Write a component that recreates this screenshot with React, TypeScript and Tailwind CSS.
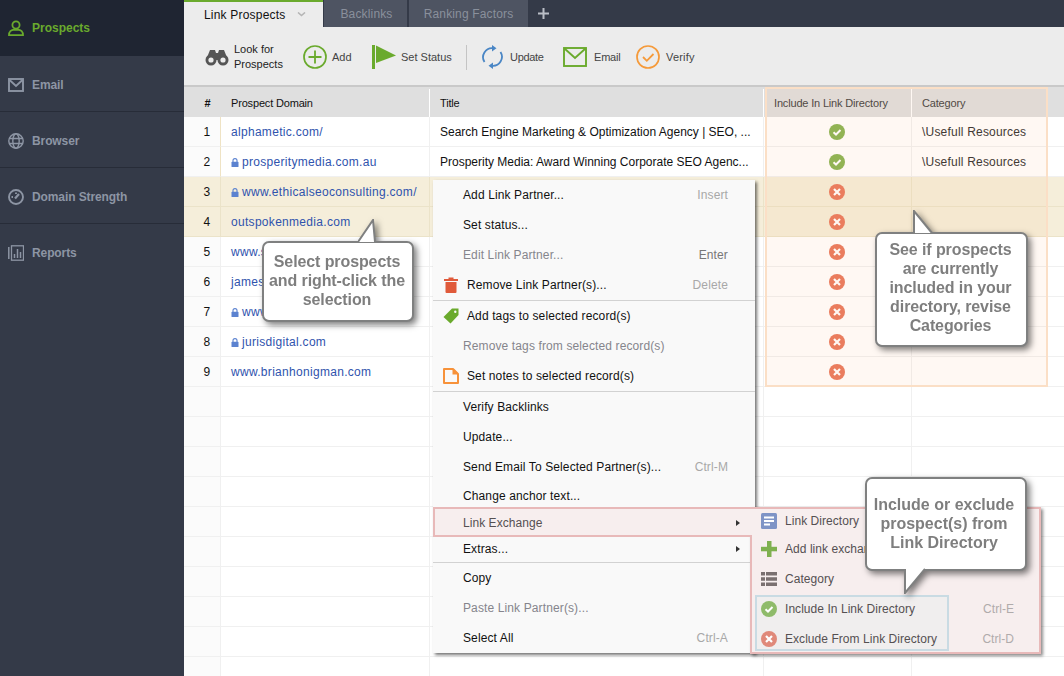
import React from "react";

const Person = () => (
  <svg width="16" height="16" viewBox="0 0 16 16" fill="none" stroke="#6aaa2d" strokeWidth="1.8"><circle cx="8" cy="5" r="3.6" /><path d="M1 15.2c0-3.6 2.6-5.2 4-5.4h6c1.6.2 4 1.8 4 5.4z" /></svg>
);
const Mail = () => (
  <svg width="16" height="14" viewBox="0 0 16 14" fill="none" stroke="#8d95a4" strokeWidth="1.9"><rect x="1" y="1" width="14" height="12" /><path d="M1 1.5 8 8l7-6.5" /></svg>
);
const Globe = () => (
  <svg width="16" height="16" viewBox="0 0 16 16" fill="none" stroke="#8d95a4" strokeWidth="1.4"><circle cx="8" cy="8" r="7.2" /><ellipse cx="8" cy="8" rx="3.2" ry="7.2" /><path d="M1 5.5h14M1 10.5h14" /></svg>
);
const Gauge = () => (
  <svg width="16" height="16" viewBox="0 0 16 16" fill="none" stroke="#8d95a4" strokeWidth="1.9"><circle cx="8" cy="8" r="7" /><path d="M7 9.5 11 5" strokeWidth="2.2" /><path d="M3.5 8h1.5M8 3.5V5" /></svg>
);
const ReportIcon = () => (
  <svg width="16" height="16" viewBox="0 0 16 16" fill="none" stroke="#8d95a4" strokeWidth="1.3"><rect x="3.5" y="0.8" width="12" height="14.4" /><path d="M0.8 2v12" strokeWidth="1.5" /><path d="M6.5 13V9M9.5 13V4M12.5 13V7" strokeWidth="1.5" /></svg>
);
const Binoculars = () => (
  <svg width="24" height="18" viewBox="0 0 24 18"><path d="M5 2h5l1 3h2l1-3h5l4 10H1z" fill="#555" /><circle cx="6" cy="12" r="5.5" fill="#555" /><circle cx="18" cy="12" r="5.5" fill="#555" /><circle cx="6" cy="12" r="2.6" fill="#ececec" /><circle cx="18" cy="12" r="2.6" fill="#ececec" /></svg>
);
const AddIcon = () => (
  <svg width="24" height="24" viewBox="0 0 24 24" fill="none" stroke="#6aaa2d"><circle cx="12" cy="12" r="11" strokeWidth="1.7" /><path d="M12 5.5v13M5.5 12h13" strokeWidth="1.8" /></svg>
);
const Flag = () => (
  <svg width="24" height="24" viewBox="0 0 24 24" fill="#6aaa2d"><rect x="0" y="0" width="3" height="24" /><path d="M4 0.5 24 10.5 4 18z" /></svg>
);
const UpdateIcon = () => (
  <svg width="21" height="24" viewBox="0 0 21 24" fill="none" stroke="#4a86c5" strokeWidth="1.8"><path d="M2.5 17A9 9 0 0 1 11 3.2" /><path d="M18.5 7A9 9 0 0 1 10 20.8" /><path d="M10 0v6.5l4.5-3.2z" fill="#4a86c5" stroke="none" /><path d="M11 24v-6.5l-4.5 3.2z" fill="#4a86c5" stroke="none" /></svg>
);
const MailGreen = () => (
  <svg width="24" height="20" viewBox="0 0 24 20" fill="none" stroke="#6aaa2d" strokeWidth="1.9"><rect x="1" y="1" width="22" height="18" /><path d="M1.5 1.5 12 11 22.5 1.5" /></svg>
);
const VerifyIcon = () => (
  <svg width="24" height="24" viewBox="0 0 24 24" fill="none" stroke="#f59a3a"><circle cx="12" cy="12" r="11" strokeWidth="1.7" /><path d="M7 12l3.8 3.8L17.5 9" strokeWidth="1.8" /></svg>
);
const Lock = () => (
  <svg width="8" height="9" viewBox="0 0 8 9" className="mr-[3px] shrink-0"><path d="M2 4V2.6a2 2 0 0 1 4 0V4" fill="none" stroke="#5b82d0" strokeWidth="1.1" /><rect x="0.5" y="3.8" width="7" height="5.2" rx="0.6" fill="#5b82d0" /></svg>
);
const Ok = ({ c = "#8ab554" }: { c?: string }) => (
  <svg width="16" height="16" viewBox="0 0 16 16"><circle cx="8" cy="8" r="8" fill={c} /><path d="M4.5 8.2 7 10.5l4.5-4.5" fill="none" stroke="#fff" strokeWidth="2" /></svg>
);
const No = ({ c = "#e97b5f" }: { c?: string }) => (
  <svg width="16" height="16" viewBox="0 0 16 16"><circle cx="8" cy="8" r="8" fill={c} /><path d="M5 5l6 6M11 5l-6 6" fill="none" stroke="#fff" strokeWidth="2.2" /></svg>
);
const Trash = () => (
  <svg width="14" height="16" viewBox="0 0 14 16" fill="#e05a3a"><rect x="0" y="2" width="14" height="2" /><rect x="4.5" y="0.5" width="5" height="2" /><path d="M1.5 5h11v10a1 1 0 0 1-1 1h-9a1 1 0 0 1-1-1z" /></svg>
);
const Tag = () => (
  <svg width="16" height="16" viewBox="0 0 16 16"><path d="M9 0.5h6.5V7l-8 8.5L0.5 9z" fill="#6aaa2d" /><circle cx="12.3" cy="3.7" r="1.2" fill="#f9f9f9" /></svg>
);
const Note = () => (
  <svg width="16" height="16" viewBox="0 0 16 16"><path d="M1 1h9l5 5v9H1z" fill="none" stroke="#f7923a" strokeWidth="2" strokeLinejoin="round" /><path d="M9.5 1h1.2L15 5.3v1.2H9.5z" fill="#f7923a" /></svg>
);
const ListBlue = () => (
  <svg width="16" height="16" viewBox="0 0 16 16"><rect width="16" height="16" rx="1.5" fill="#7f94c6" /><path d="M3 4.5h10M3 8h10M3 11.5h6" stroke="#fff" strokeWidth="1.9" /></svg>
);
const PlusGreen = () => (
  <svg width="16" height="16" viewBox="0 0 16 16" fill="#7fb04f"><rect x="6" y="0" width="4.5" height="16" /><rect x="0" y="5.8" width="16" height="4.5" /></svg>
);
const CatIcon = () => (
  <svg width="16" height="16" viewBox="0 0 16 16" fill="#7a7070"><path d="M0 1h4v3.5H0zM5 1h11v3.5H5zM0 6.2h4v3.5H0zM5 6.2h11v3.5H5zM0 11.5h4V15H0zM5 11.5h11V15H5z" /></svg>
);

const rows: { d: string; lock?: boolean; t?: string; ok?: boolean; cat?: string }[] = [
  { d: "alphametic.com/", t: "Search Engine Marketing & Optimization Agency | SEO, ...", ok: true, cat: "\\Usefull Resources" },
  { d: "prosperitymedia.com.au", lock: true, t: "Prosperity Media: Award Winning Corporate SEO Agenc...", ok: true, cat: "\\Usefull Resources" },
  { d: "www.ethicalseoconsulting.com/", lock: true },
  { d: "outspokenmedia.com" },
  { d: "www.seo.com" },
  { d: "jamesagate.com" },
  { d: "www.seomark.co.uk", lock: true },
  { d: "jurisdigital.com", lock: true },
  { d: "www.brianhonigman.com" },
];

const sideItems = [
  { label: "Email", icon: <Mail /> },
  { label: "Browser", icon: <Globe /> },
  { label: "Domain Strength", icon: <Gauge /> },
  { label: "Reports", icon: <ReportIcon /> },
];

function Tool({ icon, label, iconClass, textClass }: { icon: React.ReactNode; label: React.ReactNode; iconClass: string; textClass: string }) {
  return (
    <div className="flex items-center">
      <div className={iconClass}>{icon}</div>
      <div className={textClass}>{label}</div>
    </div>
  );
}

function Row({ i }: { i: number }) {
  const r = rows[i];
  const sel = i === 2 || i === 3;
  const line = sel ? "border-[#ebe3c9]" : "border-[#f0f0f0]";
  return (
    <div className={`grid h-[30px] shrink-0 grid-cols-[37px_209px_334px_148px_152px] text-[12px] tracking-[0.3px] ${sel ? "bg-[#f5eeda]" : "bg-white"}`}>
      <div className={`flex items-center justify-center border-r border-b pl-[10px] pt-px text-[#111] ${line} ${sel ? "" : "bg-[#fbfbfb]"} ${i < 2 ? "border-r-[#efe3c4]" : ""}`}>{r ? i + 1 : ""}</div>
      <div className={`flex items-center border-r border-b pl-[10px] pt-px text-[#2f53ad] ${line}`}>
        {r?.lock && <Lock />}
        {r?.d}
      </div>
      <div className={`flex items-center border-r border-b pl-[10px] pt-px tracking-normal whitespace-nowrap text-[#111] ${line}`}>{r?.t}</div>
      <div className={`flex items-center justify-center border-r border-b pr-px ${line}`}>{r && (r.ok ? <Ok /> : <No />)}</div>
      <div className={`flex items-center border-b pl-[10px] pt-px tracking-[0.2px] text-[#333] ${line}`}>{r?.cat}</div>
    </div>
  );
}

function MI({ h, label, icon, sc, dis, arrow }: { h: string; label: string; icon?: React.ReactNode; sc?: string; dis?: boolean; arrow?: boolean }) {
  return (
    <div className={`relative flex items-center justify-between whitespace-nowrap pr-[27px] ${h} ${icon ? "pl-[34px]" : "pl-[30px]"}`}>
      {icon && <span className="absolute left-[10px] flex h-[16px] w-[16px] items-center justify-center">{icon}</span>}
      <span className={dis ? "text-[#85858c]" : "text-[#111]"}>{label}</span>
      {sc && <span className={sc === "Enter" ? "text-[#777]" : "text-[#a8a8a8]"}>{sc}</span>}
      {arrow && <span className="absolute right-[15px] h-0 w-0 border-y-[3px] border-l-[4px] border-y-transparent border-l-[#333]" />}
    </div>
  );
}
const Sep = () => <div className="h-px bg-[#d2d2d2]" />;

function SI({ label, icon, sc, h }: { label: string; icon: React.ReactNode; sc?: string; h: string }) {
  return (
    <div className={`relative flex items-center justify-between whitespace-nowrap pl-[33px] pr-[25px] ${h}`}>
      <span className="absolute left-[9px] flex h-[16px] w-[16px] items-center justify-center">{icon}</span>
      <span className="text-[#555052]">{label}</span>
      {sc && <span className="text-[#b0abab]">{sc}</span>}
    </div>
  );
}

function Tail({ w, h, d, edge }: { w: number; h: number; d: string; edge: string }) {
  return (
    <svg width={w} height={h} viewBox={`0 0 ${w} ${h}`} className={edge}>
      <path d={d} fill="#fff" stroke="#7f8080" strokeWidth="2" />
    </svg>
  );
}

export default function App() {
  return (
    <div className="relative flex h-[676px] w-[1064px] overflow-hidden bg-white font-['Liberation_Sans',Arial,sans-serif]">
      <aside className="flex w-[184px] shrink-0 flex-col bg-[#343a48] text-[12px] font-bold">
        <div className="flex h-[56px] items-center gap-[8px] bg-[#1f2532] pl-[8px] text-[#6aaa2d]">
          <Person />
          Prospects
        </div>
        {sideItems.map((s) => (
          <div key={s.label} className="flex h-[56px] items-center gap-[8px] border-b border-[#272c38] pl-[8px] pt-[2px] tracking-[-0.1px] text-[#8d95a4] last:border-b-0 last:pt-px">
            {s.icon}
            {s.label}
          </div>
        ))}
      </aside>

      <main className="flex h-[676px] w-[880px] flex-col overflow-hidden">
        <div className="flex h-[27px] shrink-0 items-stretch bg-[#343a48] text-[12px]">
          <div className="flex w-[139px] items-center border-t-2 border-[#6aaa2d] bg-[#ececec] pl-[20px] text-[#111] tracking-[0.2px]">
            Link Prospects
            <svg width="9" height="5" viewBox="0 0 9 5" className="ml-[11px]" fill="none" stroke="#b5b5b5" strokeWidth="1.6"><path d="M1 0.5l3.5 3 3.5-3" /></svg>
          </div>
          <div className="ml-[1px] flex w-[83px] items-center justify-center bg-[#4e5462] pl-[2px] tracking-[0.15px] text-[#8a909c]">Backlinks</div>
          <div className="ml-[2px] flex w-[119px] items-center justify-center bg-[#4e5462] tracking-[0.15px] text-[#8a909c]">Ranking Factors</div>
          <svg width="11" height="11" viewBox="0 0 11 11" className="ml-[10px] self-center" fill="#b9bdc6"><rect x="4.5" width="2" height="11" /><rect y="4.5" width="11" height="2" /></svg>
        </div>

        <div className="flex h-[60px] shrink-0 items-center border-b-2 border-[#c9c9c9] bg-[#ececec] pl-[21px] pt-[2px] text-[11px] text-[#444]">
          <Tool icon={<Binoculars />} iconClass="w-[29px]" textClass="w-[69px] leading-[15px] text-[#222]" label={<>Look for<br />Prospects</>} />
          <Tool icon={<AddIcon />} iconClass="w-[29px]" textClass="w-[40px]" label="Add" />
          <Tool icon={<Flag />} iconClass="w-[29px]" textClass="w-[65px]" label="Set Status" />
          <div className="h-[25px] w-px bg-[#c4c4c4]" />
          <Tool icon={<UpdateIcon />} iconClass="ml-[15px] w-[28px]" textClass="w-[53px] tracking-[-0.3px]" label="Update" />
          <Tool icon={<MailGreen />} iconClass="w-[31px]" textClass="w-[42px] tracking-[-0.2px]" label="Email" />
          <Tool icon={<VerifyIcon />} iconClass="w-[30px]" textClass="tracking-[0.2px]" label="Verify" />
        </div>

        <div className="grid h-[30px] shrink-0 grid-cols-[37px_209px_334px_148px_152px] bg-[#dfdfdf] pt-[2px] text-[11px] tracking-[-0.17px] text-[#111]">
          <div className="flex items-center justify-center pl-[10px] font-bold">#</div>
          <div className="flex items-center border-r border-white pl-[10px]">Prospect Domain</div>
          <div className="flex items-center border-r border-white pl-[10px]">Title</div>
          <div className="flex items-center border-r border-white pl-[10px] text-[#444]">Include In Link Directory</div>
          <div className="flex items-center pl-[10px] text-[#444]">Category</div>
        </div>

        {Array.from({ length: 19 }).map((_, i) => (
          <Row key={i} i={i} />
        ))}
      </main>

      {/* highlight over the two right columns */}
      <div className="absolute left-[765px] top-[87px] h-[300px] w-[283px] border-2 border-[#fbdfc6] bg-[#fa9a5a]/[0.07]" />

      {/* context menu */}
      <div className="absolute left-[433px] top-[180px] h-[473px] w-[322px] bg-[#f9f9f9] text-[12px] tracking-[0.12px] shadow-[2px_2px_3px_rgba(0,0,0,0.55)]">
        <MI h="h-[30px]" label="Add Link Partner..." sc="Insert" />
        <MI h="h-[30px]" label="Set status..." />
        <MI h="h-[30px]" label="Edit Link Partner..." sc="Enter" dis />
        <MI h="h-[30px]" label="Remove Link Partner(s)..." sc="Delete" icon={<Trash />} />
        <Sep />
        <MI h="h-[30px]" label="Add tags to selected record(s)" icon={<Tag />} />
        <MI h="h-[30px]" label="Remove tags from selected record(s)" dis />
        <MI h="h-[30px]" label="Set notes to selected record(s)" icon={<Note />} />
        <Sep />
        <MI h="h-[30px]" label="Verify Backlinks" />
        <MI h="h-[30px]" label="Update..." />
        <MI h="h-[30px]" label="Send Email To Selected Partner(s)..." sc="Ctrl-M" />
        <MI h="h-[28px]" label="Change anchor text..." />
        <div className="h-[26px]" />
        <MI h="h-[26px]" label="Extras..." arrow />
        <Sep />
        <MI h="h-[30px]" label="Copy" />
        <MI h="h-[30px]" label="Paste Link Partner(s)..." dis />
        <MI h="h-[30px]" label="Select All" sc="Ctrl-A" />
      </div>

      {/* submenu */}
      <div className="absolute left-[750px] top-[507px] h-[147px] w-[291px] border-2 border-[#e8b9b9] bg-[#f7eeee] text-[12px] tracking-[0.05px] shadow-[2px_2px_3px_rgba(0,0,0,0.45)]">
        <SI h="h-[24px]" label="Link Directory" icon={<ListBlue />} />
        <SI h="h-[31px]" label="Add link exchange partner" icon={<PlusGreen />} />
        <SI h="h-[30px]" label="Category" icon={<CatIcon />} />
        <div className="absolute left-[3px] top-[86px] h-[56px] w-[194px] border-2 border-[#c9dbe3] bg-[#f0eeee]" />
        <div className="relative">
          <SI h="h-[30px]" label="Include In Link Directory" sc="Ctrl-E" icon={<Ok c="#8fbb6a" />} />
          <SI h="h-[30px]" label="Exclude From Link Directory" sc="Ctrl-D" icon={<No c="#e0897a" />} />
        </div>
      </div>

      {/* Link Exchange row */}
      <div className="absolute left-[433px] top-[507px] flex h-[30px] w-[319px] items-center border-y-2 border-l-2 border-[#e8b9b9] bg-[#f7eeee] pl-[28px] pt-px text-[12px] tracking-[0.05px] text-[#555052]">
        Link Exchange
        <span className="absolute right-[12px] h-0 w-0 border-y-[3px] border-l-[4px] border-y-transparent border-l-[#333]" />
      </div>

      {/* callouts */}
      <div className="absolute left-[262px] top-[241px] drop-shadow-[3px_3px_3px_rgba(0,0,0,0.5)]">
        <Tail w={20} h={24} d="M0 23 L15 1 L17 23" edge="absolute left-[96px] top-[-22px] z-10" />
        <div className="flex h-[81px] w-[152px] items-center justify-center rounded-[7px] border-2 border-[#7f8080] bg-white pb-[3px] pr-[2px] text-center text-[16px] font-bold leading-[19px] tracking-[-0.1px] text-[#7e7e7e]">
          Select prospects<br />and right-click the<br />selection
        </div>
      </div>
      <div className="absolute left-[875px] top-[232px] drop-shadow-[3px_3px_3px_rgba(0,0,0,0.5)]">
        <Tail w={22} h={24} d="M2 23 L2 1 L20 23" edge="absolute left-[37px] top-[-22px] z-10" />
        <div className="flex h-[115px] w-[153px] items-center justify-center rounded-[7px] border-2 border-[#7f8080] bg-white pb-[4px] pr-[2px] text-center text-[16px] font-bold leading-[19px] tracking-[-0.1px] text-[#7e7e7e]">
          See if prospects<br />are currently<br />included in your<br />directory, revise<br />Categories
        </div>
      </div>
      <div className="absolute left-[865px] top-[477px] drop-shadow-[3px_3px_3px_rgba(0,0,0,0.5)]">
        <div className="flex h-[94px] w-[162px] items-center justify-center rounded-[7px] border-2 border-[#7f8080] bg-white pb-[2px] pr-[4px] text-center text-[16px] font-bold leading-[19px] text-[#7e7e7e]">
          Include or exclude<br />prospect(s) from<br />Link Directory
        </div>
        <Tail w={24} h={26} d="M1 1 L1 25 L21 1" edge="absolute left-[39px] top-[91px]" />
      </div>
    </div>
  );
}
